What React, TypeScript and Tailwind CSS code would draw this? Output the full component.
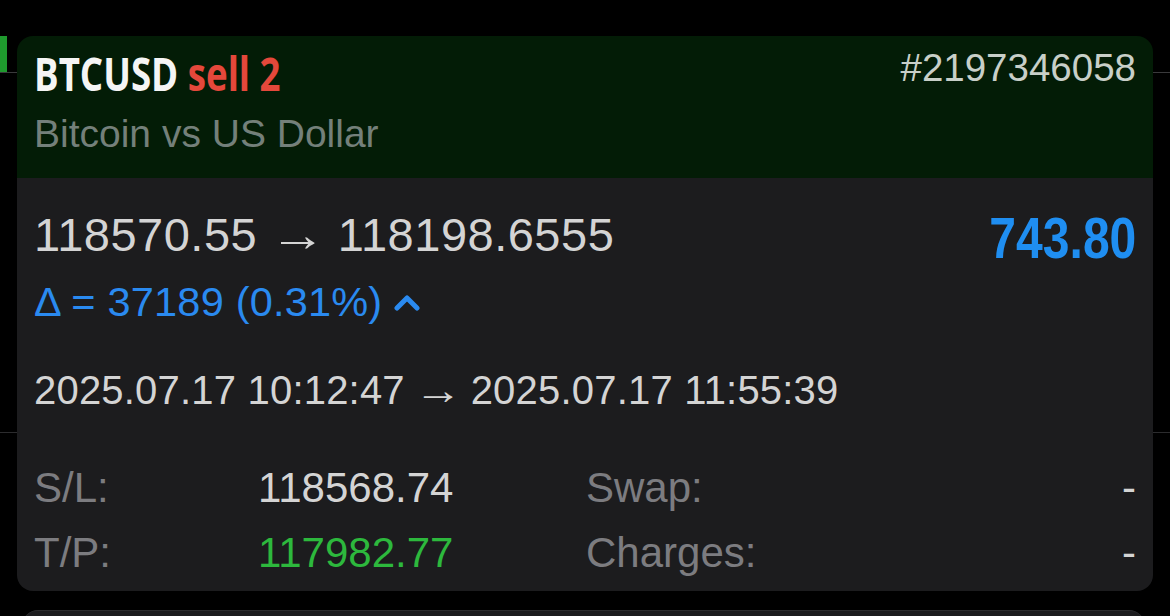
import React from 'react';

const sans = { fontFamily: '"Liberation Sans", Arial, sans-serif' };

const details = [
  { label: 'S/L:', value: '118568.74', valueColor: 'text-[#d4d4d4]', label2: 'Swap:', value2: '-' },
  { label: 'T/P:', value: '117982.77', valueColor: 'text-[#2db83d]', label2: 'Charges:', value2: '-' },
];

const App = () => {
  return (
    <div className="relative h-[616px] w-[1170px] overflow-hidden bg-black" style={sans}>
      {/* list rows behind the popup */}
      <div className="h-[36px]" />
      <div className="flex h-[37px] border-b border-[#3a3a3c]">
        <div className="w-[7px] bg-[#1f9a2e]" />
      </div>
      <div className="h-[360px] border-b border-[#2c2c2e]" />

      {/* trade card */}
      <div className="absolute left-[17px] top-[36px] w-[1136px] overflow-hidden rounded-[16px]">
        <div className="h-[142px] bg-[#031c06] px-[17px] pt-[9px]">
          <div className="flex items-start justify-between">
            <span
              className="inline-block origin-left scale-x-[0.78] whitespace-nowrap text-[47px] font-bold leading-[56px]"
              style={{ fontFamily: '"Open Sans", sans-serif' }}
            >
              <span className="text-[#f5f5f5]">BTCUSD</span>{' '}
              <span className="text-[#e5483b]">sell 2</span>
            </span>
            <span className="text-[38.5px] leading-[46px] text-[#c8cfc8]">#2197346058</span>
          </div>
          <div className="mt-[11px] text-[39px] leading-[44px] text-[#74807a]">Bitcoin vs US Dollar</div>
        </div>

        <div className="h-[413px] bg-[#1c1c1e] px-[17px] pt-[30px]">
          <div className="flex items-start justify-between">
            <span className="whitespace-nowrap text-[47px] leading-[54px] tracking-[0.5px] text-[#d4d4d4]">
              118570.55 <span className="mx-[3px] inline-block scale-x-[1.2]">→</span> 118198.6555
            </span>
            <span className="mt-[3px] inline-block origin-right scale-x-[0.843] text-[57px] font-bold leading-[54px] text-[#1f8ef1]">
              743.80
            </span>
          </div>
          <div className="mt-[13px] flex items-center gap-[11px] text-[41.5px] leading-[48px] tracking-[0.2px] text-[#2a8af0]">
            <span>Δ = 37189 (0.31%)</span>
            <svg width="28" height="18" viewBox="0 0 28 18" fill="none">
              <path d="M4 15 L14 5 L24 15" stroke="#2a8af0" strokeWidth="5" strokeLinecap="round" strokeLinejoin="round" />
            </svg>
          </div>
          <div className="mt-[40px] whitespace-nowrap text-[40px] leading-[48px] tracking-[0.2px] text-[#d4d4d4]">
            2025.07.17 10:12:47 <span className="mx-[1.5px] inline-block scale-x-[1.2]">→</span> 2025.07.17 11:55:39
          </div>
          <div className="mt-[41px] grid grid-cols-[224px_328px_1fr_auto] text-[42px] leading-[65px]">
            {details.map((row) => (
              <React.Fragment key={row.label}>
                <span className="text-[#7c7c80]">{row.label}</span>
                <span className={row.valueColor}>{row.value}</span>
                <span className="text-[#7c7c80]">{row.label2}</span>
                <span className="text-[#d4d4d4]">{row.value2}</span>
              </React.Fragment>
            ))}
          </div>
        </div>
      </div>

      {/* next card peeking below */}
      <div className="absolute left-[22px] top-[610px] h-[40px] w-[1123px] rounded-t-[16px] border-t border-[#2c2c2e] bg-[#1c1c1e]" />
    </div>
  );
};

export default App;
